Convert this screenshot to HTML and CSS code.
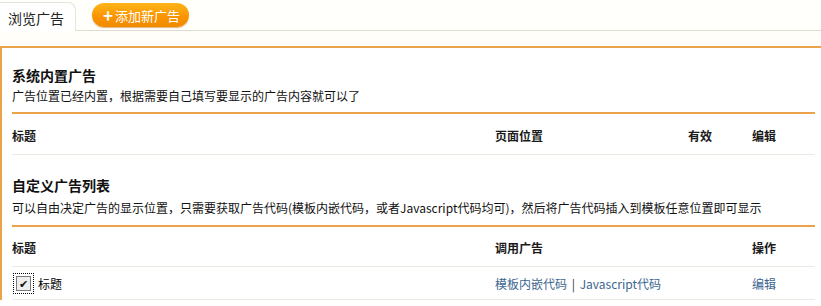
FILE: index.html
```html
<!DOCTYPE html>
<html lang="zh-CN">
<head>
    <meta charset="UTF-8">
    <title>广告管理</title>
    <link rel="stylesheet" href="styles.css">
</head>
<body>
    <div class="tabbar">
        <div class="tab active">浏览广告</div>
        <a class="add-btn" href="#"><span class="plus">+</span>添加新广告</a>
    </div>
    <div class="gap"></div>
    <div class="panel">
        <div class="section">
            <h3>系统内置广告</h3>
            <p class="desc">广告位置已经内置，根据需要自己填写要显示的广告内容就可以了</p>
        </div>
        <div class="row head sys">
            <div>标题</div>
            <div>页面位置</div>
            <div>有效</div>
            <div>编辑</div>
        </div>
        <div class="section second">
            <h3>自定义广告列表</h3>
            <p class="desc">可以自由决定广告的显示位置，只需要获取广告代码(模板内嵌代码，或者Javascript代码均可)，然后将广告代码插入到模板任意位置即可显示</p>
        </div>
        <div class="row head custom">
            <div>标题</div>
            <div>调用广告</div>
            <div>操作</div>
        </div>
        <div class="row item custom">
            <label class="check"><span class="box">✔</span>标题</label>
            <div><a href="#">模板内嵌代码</a> <span class="sep">|</span> <a href="#">Javascript代码</a></div>
            <div><a href="#">编辑</a></div>
        </div>
    </div>
</body>
</html>
```

FILE: styles.css
```css
body {
    margin: 0;
    font-family: "Noto Sans CJK SC", "DejaVu Sans", sans-serif;
    font-size: 12px;
    color: #000;
    background: #fff;
}

/* Tabs */
.tabbar {
    display: flex;
    align-items: flex-start;
    gap: 16px;
    height: 31px;
    padding-top: 2px;
    box-sizing: border-box;
    background: #fffffb;
    border-bottom: 1px solid #dedbd0;
}

.tab {
    width: 76px;
    height: 29px;
    box-sizing: border-box;
    border: 1px solid #e6e3da;
    border-left: none;
    border-bottom: none;
    border-radius: 0 8px 0 0;
    background: #fff;
    font-size: 14px;
    line-height: 30px;
    padding-left: 8px;
    color: #222;
}

.add-btn {
    display: flex;
    align-items: center;
    height: 24px;
    margin-top: 1px;
    padding: 0 9px 0 11px;
    border-radius: 12px;
    background: linear-gradient(#ffb51a, #f99300 60%, #f08a00);
    box-shadow: 0 1px 1px rgba(200, 110, 0, 0.5);
    color: #fff;
    font-size: 13px;
    text-decoration: none;
}

.plus {
    font-size: 17px;
    font-weight: bold;
    margin-right: 2px;
    line-height: 1;
    margin-top: -1px;
}

.gap {
    height: 15px;
    background: #fffef8;
}

/* Panel */
.panel {
    border-top: 2px solid #eba34a;
    border-left: 2px solid #eba34a;
    padding: 0 6px 0 10px;
}

.section {
    padding-top: 17px;
    border-bottom: 2px solid #eba34a;
    padding-bottom: 8px;
}

.section.second {
    padding-top: 20px;
    padding-bottom: 9px;
}

.section h3 {
    margin: 0;
    font-size: 14px;
    line-height: 20px;
    font-weight: bold;
    color: #111;
}

.section .desc {
    margin: 3px 0 0;
    line-height: 16px;
    color: #111;
}

.section.second .desc {
    margin-top: 5px;
}

.row {
    display: grid;
    align-items: center;
    border-bottom: 1px solid #ece9e2;
}

.row.head {
    height: 38px;
    font-weight: bold;
    color: #1a1a1a;
    padding-top: 2px;
}

.row.head.custom {
    height: 37px;
}

.row.sys {
    grid-template-columns: 483px 193px 64px 1fr;
}

.row.custom {
    grid-template-columns: 483px 257px 1fr;
}

.row.item {
    height: 32px;
}

.check {
    display: flex;
    align-items: center;
    gap: 7px;
}

.box {
    width: 15px;
    height: 15px;
    box-sizing: border-box;
    border: 1px solid #7a7a7a;
    outline: 1px dotted #000;
    outline-offset: 2px;
    background: #eee;
    font-size: 11px;
    font-weight: bold;
    line-height: 13px;
    text-align: center;
    color: #111;
    margin-left: 4px;
}

a {
    color: #3c6590;
    text-decoration: none;
}

.sep {
    color: #333;
    margin: 0 2px;
}
```
